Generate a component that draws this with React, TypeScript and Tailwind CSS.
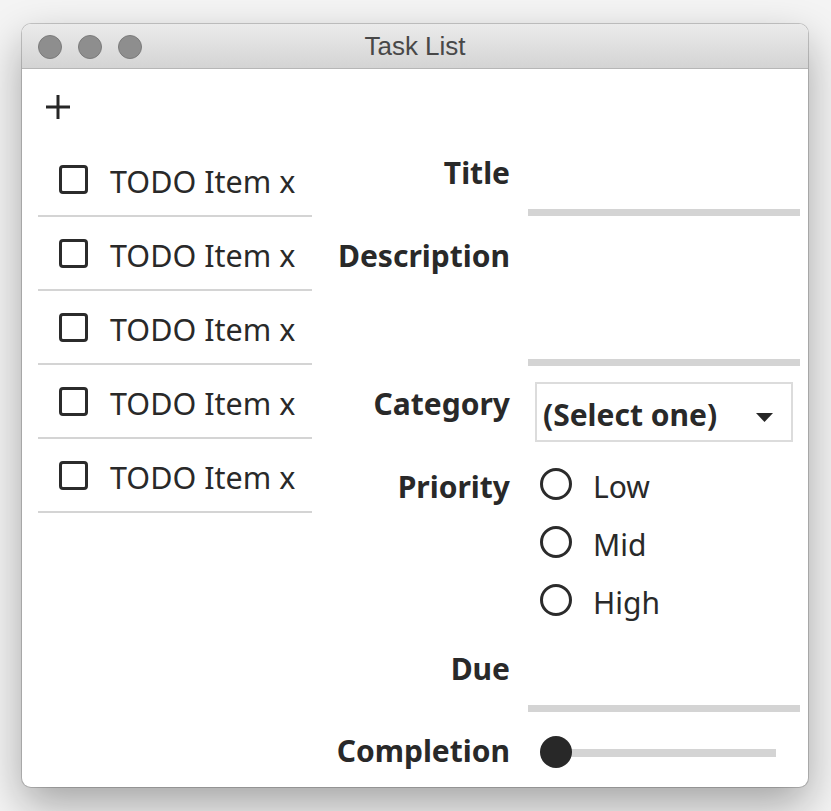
import React from "react";

const Label = ({ children, pt }: { children: React.ReactNode; pt: string }) => (
  <div className={`w-[198px] shrink-0 text-right text-[30px] font-bold leading-[40px] ${pt}`}>{children}</div>
);

export default function App() {
  const items = [1, 2, 3, 4, 5];
  const priorities = ["Low", "Mid", "High"];
  return (
    <div className="h-[811px] w-[831px] overflow-hidden bg-[#f4f4f4] pl-[22px] pt-[24px]">
      <div className="h-[763px] w-[786px] overflow-hidden rounded-[9px] bg-white text-[#292929] shadow-[0_0_0_1px_rgba(0,0,0,0.18),0_18px_44px_rgba(0,0,0,0.33)] font-['Noto_Sans','Open_Sans',sans-serif]">
        {/* Title bar */}
        <div className="grid h-[45px] grid-cols-[1fr_auto_1fr] items-center border-b border-[#b6b6b6] bg-gradient-to-b from-[#ebebeb] to-[#d4d4d4]">
          <div className="flex items-center gap-[16px] pl-[16px] pt-[1px]">
            <div className="h-[24px] w-[24px] rounded-full border border-[#7b7b7b] bg-[#8e8e8e]" />
            <div className="h-[24px] w-[24px] rounded-full border border-[#7b7b7b] bg-[#8e8e8e]" />
            <div className="h-[24px] w-[24px] rounded-full border border-[#7b7b7b] bg-[#8e8e8e]" />
          </div>
          <div className="font-['Liberation_Sans',Arial,sans-serif] text-[26px] leading-[30px] text-[#484848]">Task List</div>
          <div />
        </div>

        {/* Toolbar */}
        <div className="flex h-[74px] items-center pl-[24px]">
          <svg width="24" height="24" viewBox="0 0 24 24" className="mt-[1px]">
            <path d="M12 0V24M0 12H24" stroke="#262626" strokeWidth="3" fill="none" />
          </svg>
        </div>

        {/* Main */}
        <div className="flex">
          {/* List */}
          <div className="ml-[16px] w-[274px] shrink-0">
            {items.map((i) => (
              <div key={i} className="flex h-[74px] items-center border-b-2 border-[#d4d4d4]">
                <div className="ml-[21px] h-[29px] w-[29px] shrink-0 rounded-[4px] border-[3px] border-[#2b2b2b]" />
                <span className="ml-[22px] pt-1 text-[30.5px] leading-[40px] whitespace-nowrap">TODO Item x</span>
              </div>
            ))}
          </div>

          {/* Form */}
          <div className="flex-1 pr-[8px]">
            <div className="flex h-[73px]">
              <Label pt="pt-[10px]">Title</Label>
              <div className="ml-[18px] flex-1 border-b-[7px] border-[#d4d4d4]" />
            </div>
            <div className="flex h-[150px]">
              <Label pt="pt-[20px]">Description</Label>
              <div className="ml-[18px] flex-1 border-b-[7px] border-[#d4d4d4]" />
            </div>
            <div className="flex h-[76px]">
              <Label pt="pt-[18px]">Category</Label>
              <div className="ml-[18px] flex-1 pt-[16px]">
                <div className="mx-[7px] flex h-[60px] items-start justify-between border-2 border-[#dcdcdc] pl-[6px] pr-[18px] pt-[11px]">
                  <span className="text-[30px] font-bold leading-[40px] whitespace-nowrap">(Select one)</span>
                  <svg width="17" height="9" viewBox="0 0 17 9" className="self-center">
                    <path d="M0 0H17L8.5 9Z" fill="#262626" />
                  </svg>
                </div>
              </div>
            </div>
            <div className="flex h-[189px]">
              <Label pt="pt-[25px]">Priority</Label>
              <div className="ml-[18px] flex-1 pt-[15px]">
                {priorities.map((p) => (
                  <div key={p} className="flex h-[58px] items-center">
                    <div className="-mt-1 ml-[12px] h-[32px] w-[32px] shrink-0 rounded-full border-[3px] border-[#2b2b2b]" />
                    <span className="ml-[21px] pt-[2px] text-[30px] leading-[40px]">{p}</span>
                  </div>
                ))}
              </div>
            </div>
            <div className="flex h-[81px]">
              <Label pt="pt-[18px]">Due</Label>
              <div className="ml-[18px] flex-1 border-b-[7px] border-[#d4d4d4]" />
            </div>
            <div className="flex h-[56px]">
              <Label pt="pt-[19px]">Completion</Label>
              <div className="ml-[18px] flex-1 pt-[24px]">
                <div className="relative ml-[12px] h-[32px] w-[236px]">
                  <div className="absolute left-[16px] right-0 top-[13px] h-[8px] bg-[#d4d4d4]" />
                  <div className="absolute left-0 top-0 h-[32px] w-[32px] rounded-full bg-[#282828]" />
                </div>
              </div>
            </div>
          </div>
        </div>
      </div>
    </div>
  );
}
